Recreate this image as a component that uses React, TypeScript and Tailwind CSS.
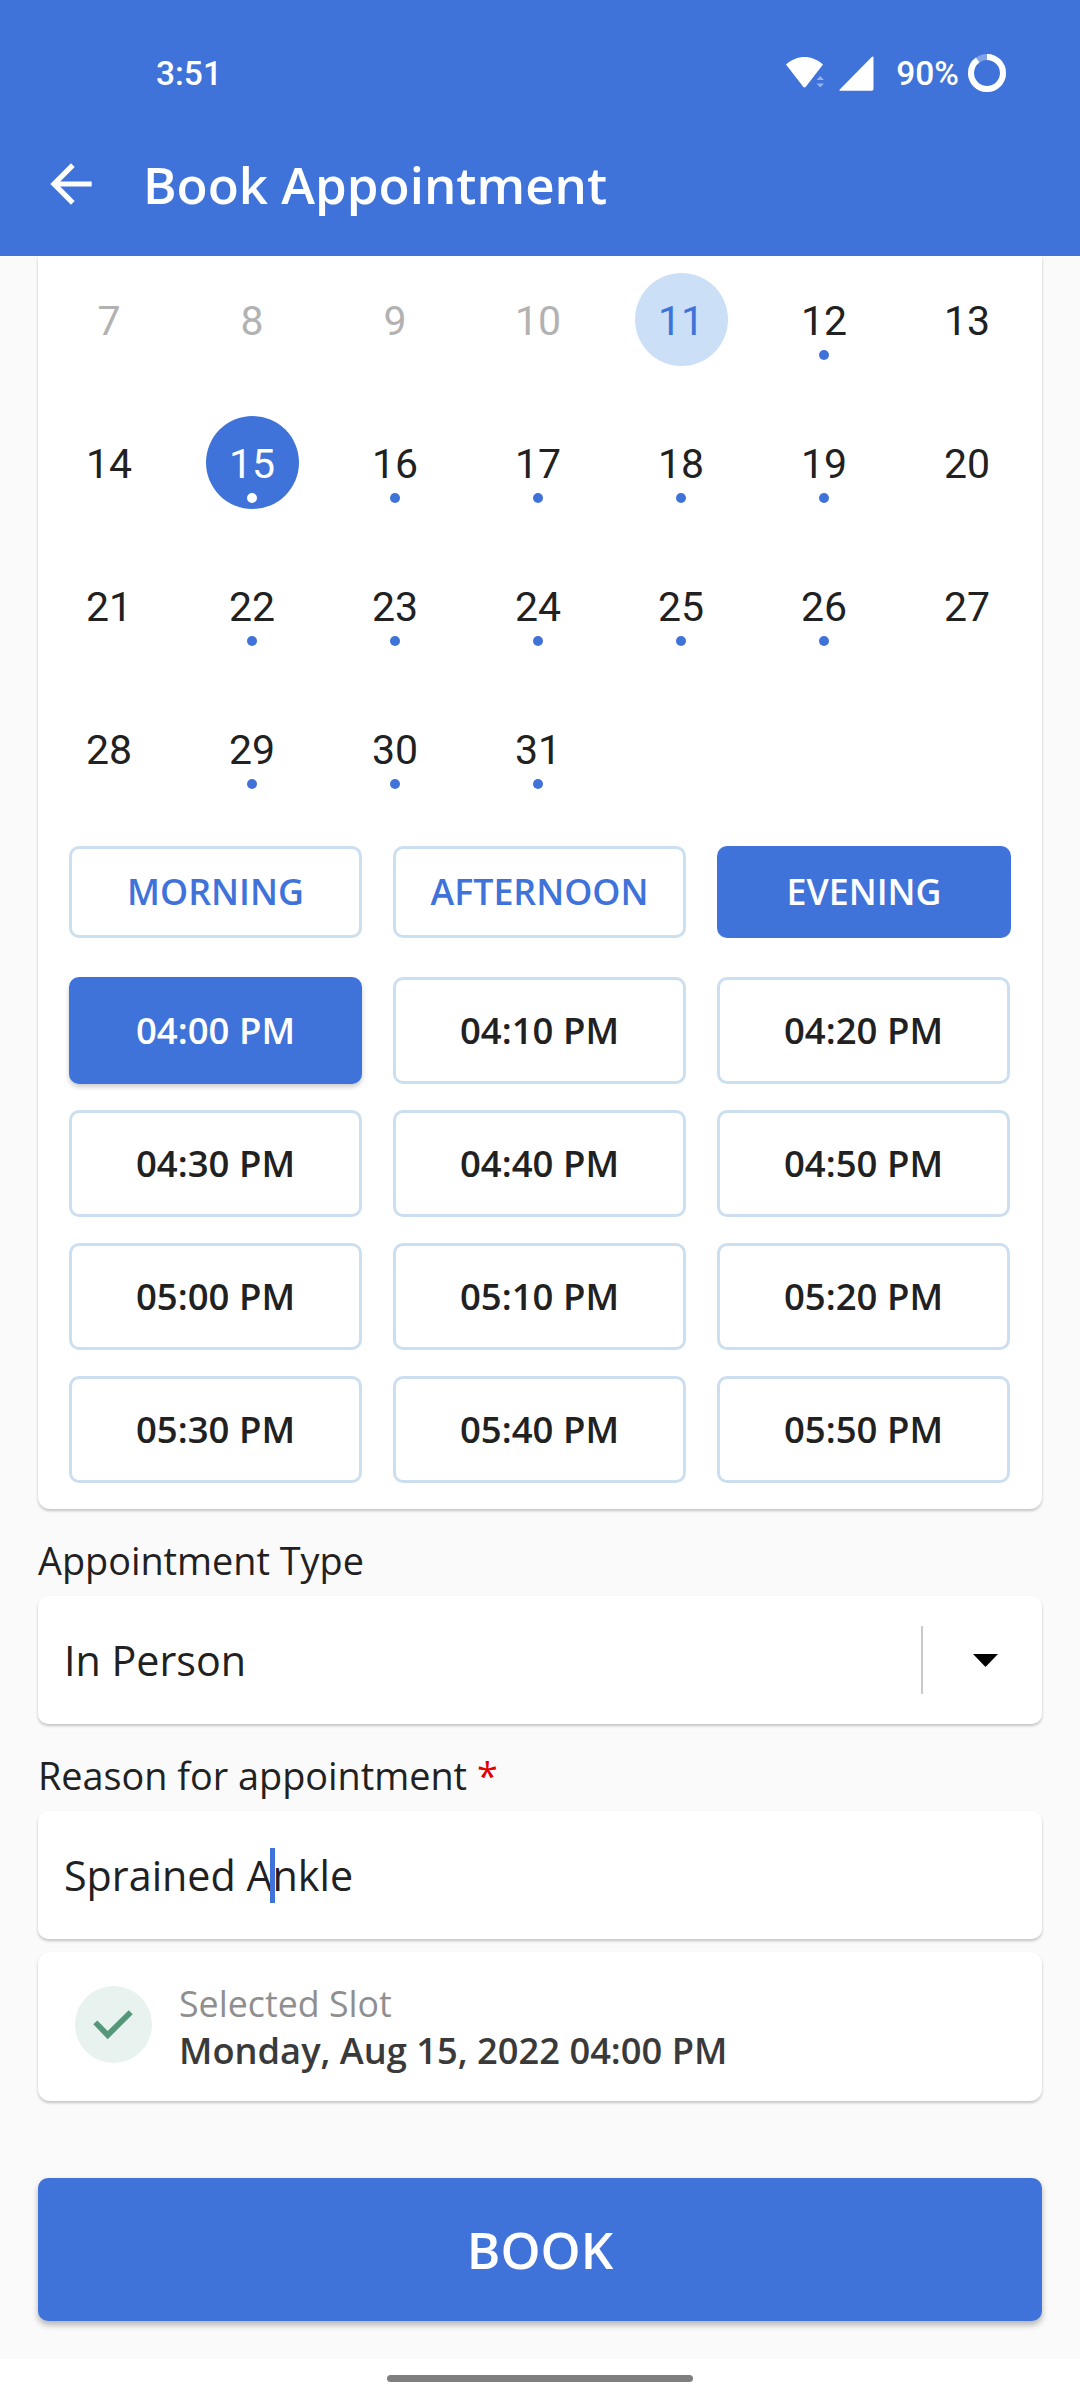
import { useState } from "react"
import clsx from "clsx"

const WEEKS = [
  [7, 8, 9, 10, 11, 12, 13],
  [14, 15, 16, 17, 18, 19, 20],
  [21, 22, 23, 24, 25, 26, 27],
  [28, 29, 30, 31],
]
const TODAY = 11
const AVAILABLE = [12, 15, 16, 17, 18, 19, 22, 23, 24, 25, 26, 29, 30, 31]

const PERIODS = ["MORNING", "AFTERNOON", "EVENING"]

const SLOTS = [
  "04:00 PM", "04:10 PM", "04:20 PM",
  "04:30 PM", "04:40 PM", "04:50 PM",
  "05:00 PM", "05:10 PM", "05:20 PM",
  "05:30 PM", "05:40 PM", "05:50 PM",
]

function StatusBar() {
  return (
    <div className="flex h-[112px] items-center pt-[34px] pl-[156px] pr-[74px] font-[Roboto,sans-serif] text-[33.5px] font-medium">
      <span className="pt-[2px]">3:51</span>
      <div className="ml-auto flex items-center">
        {/* wifi */}
        <svg width="40" height="34" viewBox="0 0 40 34" className="mr-[14px]">
          <path d="M1 8.5C12 -1.5 27 -1.5 38 8.5L21 30.5Q19.5 32.5 18 30.5Z" fill="#fff" />
          <path d="M31.5 24L35.2 20L39 24ZM31.5 27.5L35.2 31.5L39 27.5Z" fill="#fff" opacity=".45" />
        </svg>
        {/* mobile signal */}
        <svg width="35" height="35" viewBox="0 0 35 35" className="mr-[22px]">
          <path d="M33 .8Q34.5 0 34.5 2V33Q34.5 34.8 32.7 34.8H1.5Q-.3 34.8 1 33.2Z" fill="#fff" />
        </svg>
        <span className="mr-[9px] pt-[2px]">90%</span>
        {/* battery ring */}
        <svg width="38" height="38" viewBox="0 0 38 38">
          <circle cx="19" cy="19" r="16" fill="none" stroke="#fff" strokeOpacity=".35" strokeWidth="6" />
          <circle
            cx="19"
            cy="19"
            r="16"
            fill="none"
            stroke="#fff"
            strokeWidth="6"
            pathLength="100"
            strokeDasharray="90 10"
            transform="rotate(-90 19 19)"
          />
        </svg>
      </div>
    </div>
  )
}

function Day({ day, selected, onSelect }: { day: number; selected: boolean; onSelect: () => void }) {
  const past = day < TODAY
  const today = day === TODAY
  return (
    <button className="flex h-[143px] justify-center" disabled={past} onClick={onSelect}>
      <span
        className={clsx(
          "flex h-[93px] w-[93px] flex-col items-center rounded-full pt-[19px] pr-[1px] text-[41px] leading-[58px]",
          selected && "bg-[#4073d9] text-white",
          !selected && today && "bg-[#cbdff7] text-[#4073d9]",
          !selected && past && "text-[#b2b2b2]",
          !selected && !past && !today && "text-[#212121]"
        )}
      >
        {day}
        {AVAILABLE.includes(day) && (
          <span className={clsx("h-[10px] w-[10px] rounded-full", selected ? "bg-white" : "bg-[#4073d9]")} />
        )}
      </span>
    </button>
  )
}

export default function App() {
  const [day, setDay] = useState(15)
  const [period, setPeriod] = useState("EVENING")
  const [slot, setSlot] = useState("04:00 PM")

  return (
    <div className="flex h-[2400px] w-[1080px] flex-col overflow-hidden bg-[#fafafa] font-['Open_Sans',sans-serif] text-[#212121]">
      <header className="relative z-10 h-[256px] shrink-0 bg-[#4073d9] text-white">
        <StatusBar />
        <div className="flex h-[144px] items-center pl-[40px]">
          <svg width="62" height="62" viewBox="0 0 24 24" fill="#fff">
            <path d="M20 11H7.83l5.59-5.59L12 4l-8 8 8 8 1.41-1.41L7.83 13H20v-2z" />
          </svg>
          <h1 className="ml-[41px] text-[51px] font-semibold">Book Appointment</h1>
        </div>
      </header>

      <main className="flex h-[2103px] flex-1 flex-col px-[38px]">
        <section className="h-[1253px] rounded-b-[12px] bg-white pt-[17px] shadow-[0_2px_3px_rgba(0,0,0,0.22)]">
          <div className="grid w-[1001px] grid-cols-7 font-[Roboto,sans-serif]">
            {WEEKS.flat().map((d) => (
              <Day key={d} day={d} selected={d === day} onSelect={() => setDay(d)} />
            ))}
          </div>

          {/* part of day */}
          <div className="mt-px flex gap-[31px] pl-[31px]">
            {PERIODS.map((p) => (
              <button
                key={p}
                onClick={() => setPeriod(p)}
                className={clsx(
                  "h-[92px] rounded-[10px] pb-px text-[35.75px] font-semibold",
                  p === period
                    ? "w-[294px] bg-[#4073d9] text-white"
                    : "w-[293px] border-[3px] border-[#ccdff0] text-[#4073d9]"
                )}
              >
                {p}
              </button>
            ))}
          </div>

          {/* time slots */}
          <div className="mt-[39px] grid w-fit grid-cols-3 gap-x-[31px] gap-y-[26px] pl-[31px]">
            {SLOTS.map((s) => (
              <button
                key={s}
                onClick={() => setSlot(s)}
                className={clsx(
                  "h-[107px] w-[293px] rounded-[10px] text-[36.5px] font-semibold",
                  s === slot
                    ? "bg-[#4073d9] text-white shadow-[0_3px_5px_rgba(0,0,0,0.2)]"
                    : "border-[3px] border-[#ccdff0]"
                )}
              >
                {s}
              </button>
            ))}
          </div>
        </section>

        <label className="mt-[27px] h-[60px] text-[37.8px] leading-[49px]">Appointment Type</label>
        <div className="flex h-[128px] items-center rounded-[10px] bg-white pl-[26px] shadow-[0_2px_3px_rgba(0,0,0,0.22)]">
          <span className="text-[41.25px] leading-[56px]">In Person</span>
          <span className="ml-auto h-[68px] w-[2px] bg-[#c9c9c9]" />
          <svg width="25" height="13" viewBox="0 0 25 13" className="ml-[50px] mr-[44px]">
            <path d="M0 0H25L12.5 13Z" fill="#000" />
          </svg>
        </div>

        <label className="mt-[27px] h-[60px] text-[37.8px] leading-[49px]">
          Reason for appointment <span className="text-[#e00000]">*</span>
        </label>
        <div className="flex h-[128px] items-center rounded-[10px] bg-white pl-[26px] text-[41.25px] leading-[56px] shadow-[0_2px_3px_rgba(0,0,0,0.22)]">
          <span>Sprained A</span>
          {/* text caret */}
          <span className="relative -mx-[2.5px] h-[55px] w-[5px] bg-[#4073d9]" />
          <span>nkle</span>
        </div>

        <div className="mt-[13px] flex h-[149px] items-center rounded-[12px] bg-white pl-[36.5px] shadow-[0_2px_3px_rgba(0,0,0,0.22)]">
          <span className="mt-[-4px] flex h-[77px] w-[77px] items-center justify-center rounded-full bg-[#e8f2ee]">
            <svg width="40" height="30" viewBox="0 0 40 30" fill="#549779">
              <path d="M.3 14.3L4.3 10.5L14.7 20.9L35.7 .3L39.7 4.3L14.7 29.2Z" />
            </svg>
          </span>
          <div className="ml-[27.5px] flex flex-col leading-[47px]">
            <span className="text-[35.75px] text-[#8f8f8f]">Selected Slot</span>
            <span className="text-[36.25px] font-semibold text-[#3a3a3a]">
              Monday, Aug {day}, 2022 {slot}
            </span>
          </div>
        </div>

        <button className="mt-[77px] h-[143px] rounded-[10px] bg-[#4073d9] text-[51px] font-semibold text-white shadow-[0_4px_6px_rgba(0,0,0,0.28)]">
          BOOK
        </button>
      </main>

      <footer className="flex h-[41px] shrink-0 justify-center bg-white pt-[16px]">
        <span className="h-[7px] w-[306px] rounded-full bg-[#7f7f7f]" />
      </footer>
    </div>
  )
}
